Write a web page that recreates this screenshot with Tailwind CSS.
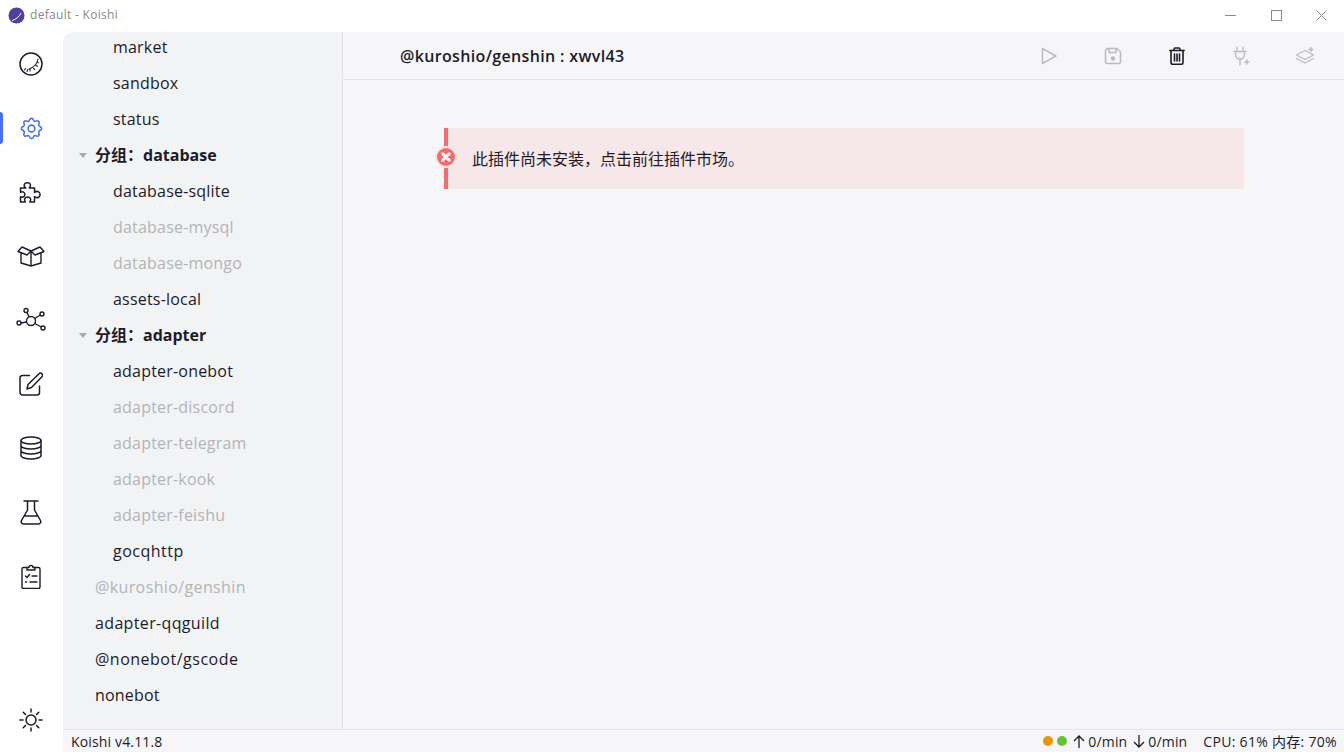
<!DOCTYPE html>
<html lang="zh-CN">
  <head>
    <meta charset="UTF-8" />
    <title>default - Koishi</title>
    <script src="https://cdn.jsdelivr.net/npm/@tailwindcss/browser@4"></script>
  </head>
  <body class="w-[1344px] h-[752px] overflow-hidden bg-white flex flex-col text-[#1c1c28] font-['Open_Sans','Noto_Sans_CJK_SC',sans-serif]">
    <!-- title bar -->
    <div class="h-[32px] shrink-0 flex items-center pl-[8px]">
      <svg class="w-[17px] h-[17px] -mt-[2px]" viewBox="0 0 17 17">
        <circle cx="8.5" cy="8.5" r="8" fill="#4f3f9e" />
        <path d="M4 13.5C8 12.5 11 10 13 6" stroke="#fff" stroke-width="1" fill="none" />
      </svg>
      <span class="ml-[5px] -mt-[2px] text-[12px] tracking-[0.3px] text-[#8a8a8a]">default - Koishi</span>
      <div class="ml-auto flex items-center -mt-[2px]">
        <div class="w-[46px] flex justify-center"><div class="w-[11px] h-px bg-[#8a8a8a]"></div></div>
        <div class="w-[46px] flex justify-center"><div class="w-[11px] h-[11px] border border-[#8a8a8a]"></div></div>
        <div class="w-[45px] flex justify-center pr-[1px]">
          <svg class="w-[11px] h-[11px]" viewBox="0 0 11 11"><path d="M.5.5l10 10M10.5.5l-10 10" stroke="#8a8a8a" fill="none" /></svg>
        </div>
      </div>
    </div>

    <div class="flex-1 flex min-h-0">
      <!-- activity bar -->
      <nav class="w-[63px] shrink-0 flex flex-col items-center relative pr-[1px]">
        <div class="absolute left-0 top-[80px] w-[3px] h-[32px] rounded-r-[3px] bg-[#4e6ef2]"></div>
        <div class="h-[64px] w-full flex items-center justify-center">
          <svg class="w-[24px] h-[24px]" viewBox="0 0 24 24" fill="none" stroke="currentColor" stroke-width="1.5" stroke-linecap="round">
            <circle cx="12" cy="12" r="11" />
            <path d="M19 7c-.5 4-3.500 8-9 10M5.500 18l1-1.500M8 19.500l.8-2M11 19l.2-1.800M14.500 16.500l1.300 1M17 13.500l1.500.7M18.200 10.500l1.500.2" stroke-width="1.100" />
          </svg>
        </div>
        <div class="h-[64px] w-full flex items-center justify-center">
          <svg class="w-[27px] h-[27px]" viewBox="0 0 24 24" fill="none" stroke="#4e6ef2" stroke-width="1.400" stroke-linecap="round" stroke-linejoin="round">
            <path d="M10.325 4.317c.426-1.756 2.924-1.756 3.350 0a1.724 1.724 0 0 0 2.573 1.066c1.543-.940 3.310.826 2.370 2.370a1.724 1.724 0 0 0 1.065 2.572c1.756.426 1.756 2.924 0 3.350a1.724 1.724 0 0 0-1.066 2.573c.940 1.543-.826 3.310-2.370 2.370a1.724 1.724 0 0 0-2.572 1.065c-.426 1.756-2.924 1.756-3.350 0a1.724 1.724 0 0 0-2.573-1.066c-1.543.940-3.310-.826-2.370-2.370a1.724 1.724 0 0 0-1.065-2.572c-1.756-.426-1.756-2.924 0-3.350a1.724 1.724 0 0 0 1.066-2.573c-.940-1.543.826-3.310 2.370-2.370.996.608 2.296.070 2.572-1.065z" />
            <circle cx="12" cy="12" r="3" />
          </svg>
        </div>
        <div class="h-[64px] w-full flex items-center justify-center">
          <svg class="w-[28px] h-[28px]" viewBox="0 0 24 24" fill="none" stroke="currentColor" stroke-width="1.300" stroke-linecap="round" stroke-linejoin="round">
            <path d="M3 8.500h4.500c-1.500-1-1.500-2-1.200-3 .5-1.700 4.400-2 5.200 0 .4 1-.2 2-1 3H15v4c1.200-1.200 2.500-1.200 3.500-.6 1.700 1 1.700 3.600 0 4.600-1 .6-2.300.5-3.500-.6v4.600h-4c.8-1 1-2 .5-3-.8-1.500-4-1.500-4.800 0-.5 1-.2 2 .5 3H3v-4.500c1 .6 2 .6 2.800 0 1.200-1 1.200-2.800 0-3.800-.8-.6-1.800-.6-2.800 0z" />
          </svg>
        </div>
        <div class="h-[64px] w-full flex items-center justify-center">
          <svg class="w-[28px] h-[24px]" viewBox="0 0 28 24" fill="none" stroke="currentColor" stroke-width="1.400" stroke-linecap="round" stroke-linejoin="round">
            <path d="M4 9.500V19l10 3 10-3V9.500M14 7v15M14 7L5 3 1 7.500l9 3.500zM14 7l9-4 4 4.500-9 3.500z" />
          </svg>
        </div>
        <div class="h-[64px] w-full flex items-center justify-center">
          <svg class="w-[30px] h-[26px]" viewBox="0 0 30 26" fill="none" stroke="currentColor" stroke-width="1.400">
            <circle cx="15" cy="14" r="4.500" /><circle cx="10" cy="3.500" r="2" /><circle cx="26" cy="7" r="2" /><circle cx="3" cy="16" r="2" /><circle cx="27" cy="21" r="2" />
            <path d="M11 5.500l2 4.500M24.300 8l-5.500 3.500M5 16l5.500-1M25.300 20l-6.500-3.500" />
          </svg>
        </div>
        <div class="h-[64px] w-full flex items-center justify-center">
          <svg class="w-[24px] h-[24px]" viewBox="0 0 24 24" fill="none" stroke="currentColor" stroke-width="1.500" stroke-linecap="round" stroke-linejoin="round">
            <path d="M10.500 3.500H3.500a2.500 2.500 0 0 0-2.500 2.500V20.500A2.500 2.500 0 0 0 3.500 23h14.500a2.500 2.500 0 0 0 2.500-2.500V14" />
            <path d="M20.500 1.300a2.200 2.200 0 0 1 2.700 3.200L12.500 15.500 8 17l1-4.500z" />
          </svg>
        </div>
        <div class="h-[64px] w-full flex items-center justify-center">
          <svg class="w-[22px] h-[24px]" viewBox="0 0 22 24" fill="none" stroke="currentColor" stroke-width="1.500">
            <ellipse cx="11" cy="4.500" rx="10" ry="3.500" />
            <path d="M1 4.500v15c0 2 4.500 3.500 10 3.500s10-1.500 10-3.500v-15M1 9.500c0 2 4.500 3.500 10 3.500s10-1.500 10-3.500M1 14.500c0 2 4.500 3.500 10 3.500s10-1.500 10-3.500" />
          </svg>
        </div>
        <div class="h-[64px] w-full flex items-center justify-center">
          <svg class="w-[22px] h-[25px]" viewBox="0 0 22 25" fill="none" stroke="currentColor" stroke-width="1.500" stroke-linejoin="round" stroke-linecap="round">
            <path d="M4 1h14M7.500 1v9L1.500 20.500c-.8 1.700.2 3.500 2 3.500h15c1.800 0 2.800-1.800 2-3.500L14.500 10V1M4.500 16h13" />
          </svg>
        </div>
        <div class="h-[64px] w-full flex items-center justify-center">
          <svg class="w-[20px] h-[25px]" viewBox="0 0 20 25" fill="none" stroke="currentColor" stroke-width="1.400" stroke-linecap="round" stroke-linejoin="round">
            <path d="M6 3.500H2.500A1.500 1.500 0 0 0 1 5v18a1.500 1.500 0 0 0 1.500 1.500h15A1.500 1.500 0 0 0 19 23V5a1.500 1.500 0 0 0-1.500-1.500H14" />
            <path d="M6 3.500h2a2 2 0 0 1 4 0h2V6H6z" />
            <path d="M4.500 12l1.500 1.500 2.500-3M11 12h5M4.500 18h1M9 18h7" />
          </svg>
        </div>
        <div class="mt-auto h-[64px] w-full flex items-center justify-center">
          <svg class="w-[24px] h-[24px]" viewBox="0 0 24 24" fill="none" stroke="currentColor" stroke-width="1.500" stroke-linecap="round">
            <circle cx="12" cy="12" r="5" />
            <path d="M12 1v3M12 20v3M1 12h3M20 12h3M4.200 4.200l2.200 2.200M17.600 17.600l2.200 2.200M4.200 19.800l2.200-2.200M17.600 6.400l2.200-2.200" />
          </svg>
        </div>
      </nav>

      <div class="flex-1 flex flex-col min-w-0">
        <div class="flex-1 flex min-h-0">
          <!-- plugin tree -->
          <aside class="w-[280px] shrink-0 bg-[#f2f3f5] rounded-tl-[12px] border-r border-[#e3e4e8] overflow-hidden text-[16px] leading-[36px] tracking-[0.2px]">
            <div class="-mt-[3px]">
              <div class="pl-[50px]">market</div>
              <div class="pl-[50px]">sandbox</div>
              <div class="pl-[50px]">status</div>
              <div class="flex items-center pl-[16px] font-bold tracking-normal">
                <div class="w-0 h-0 border-x-[4px] border-x-transparent border-t-[5px] border-t-[#a8a8ad] mr-[8px]"></div>分组：database
              </div>
              <div class="pl-[50px]">database-sqlite</div>
              <div class="pl-[50px] text-[#b4b4b8]">database-mysql</div>
              <div class="pl-[50px] text-[#b4b4b8]">database-mongo</div>
              <div class="pl-[50px]">assets-local</div>
              <div class="flex items-center pl-[16px] font-bold tracking-normal">
                <div class="w-0 h-0 border-x-[4px] border-x-transparent border-t-[5px] border-t-[#a8a8ad] mr-[8px]"></div>分组：adapter
              </div>
              <div class="pl-[50px]">adapter-onebot</div>
              <div class="pl-[50px] text-[#b4b4b8]">adapter-discord</div>
              <div class="pl-[50px] text-[#b4b4b8]">adapter-telegram</div>
              <div class="pl-[50px] text-[#b4b4b8]">adapter-kook</div>
              <div class="pl-[50px] text-[#b4b4b8]">adapter-feishu</div>
              <div class="pl-[50px] tracking-[0.5px]">gocqhttp</div>
              <div class="pl-[32px] text-[#b4b4b8] tracking-[0.38px]">@kuroshio/genshin</div>
              <div class="pl-[32px] tracking-[0.35px]">adapter-qqguild</div>
              <div class="pl-[32px] tracking-[0.5px]">@nonebot/gscode</div>
              <div class="pl-[32px]">nonebot</div>
            </div>
          </aside>

          <!-- main panel -->
          <main class="flex-1 min-w-0 bg-[#f6f6f9] flex flex-col">
            <header class="h-[48px] shrink-0 border-b border-[#e3e4e8] flex items-center pl-[57px]">
              <span class="text-[16px] font-semibold tracking-[0.35px]">@kuroshio/genshin : xwvl43</span>
              <div class="ml-auto flex items-center pr-[7px]">
                <div class="w-[64px] flex justify-center">
                  <svg class="w-[16px] h-[18px]" viewBox="0 0 16 18" fill="none" stroke="#bcbcc0" stroke-width="1.500" stroke-linejoin="round"><path d="M1.500 1.500v15L15 9z" /></svg>
                </div>
                <div class="w-[64px] flex justify-center">
                  <svg class="w-[18px] h-[18px]" viewBox="0 0 18 18" fill="none" stroke="#bcbcc0" stroke-width="1.500" stroke-linejoin="round">
                    <path d="M3 1.500h10l3.500 3.500v9.500a2 2 0 0 1-2 2h-11a2 2 0 0 1-2-2v-10.500a2 2 0 0 1 2-2zM5 1.500v4h7v-4" />
                    <circle cx="9" cy="11.500" r="1.500" fill="#bcbcc0" />
                  </svg>
                </div>
                <div class="w-[64px] flex justify-center">
                  <svg class="w-[16px] h-[18px]" viewBox="0 0 16 18" fill="none" stroke="#1c1c28" stroke-width="1.600" stroke-linecap="round">
                    <path d="M.8 3.500h14.400M5 3.500V2.200A1.200 1.200 0 0 1 6.200 1h3.600A1.200 1.200 0 0 1 11 2.200v1.300" />
                    <path d="M2 3.500v12a1.800 1.800 0 0 0 1.800 1.800h8.400a1.800 1.800 0 0 0 1.800-1.800v-12" />
                    <path d="M5.500 7v7M8 7v7M10.500 7v7" />
                  </svg>
                </div>
                <div class="w-[64px] flex justify-center">
                  <svg class="w-[17px] h-[20px]" viewBox="0 0 17 20" fill="none" stroke="#bcbcc0" stroke-width="1.400" stroke-linecap="round" stroke-linejoin="round">
                    <path d="M4 1v4M10 1v4M1 5.500h12M2.500 5.500v3a4.500 4.500 0 0 0 9 0v-3M7 13v6M14 14v4M12 16h4" />
                  </svg>
                </div>
                <div class="w-[64px] flex justify-center">
                  <svg class="w-[20px] h-[18px]" viewBox="0 0 20 18" fill="none" stroke="#bcbcc0" stroke-width="1.400" stroke-linecap="round" stroke-linejoin="round">
                    <path d="M10 3.500L1.500 8l8.500 4.500L18.500 8zM1.500 11.500l8.500 4.500 8.500-4.500M16 .5v4M14 2.500h4" />
                  </svg>
                </div>
              </div>
            </header>
            <div class="px-[101px] pt-[48px]">
              <div class="relative h-[61px] w-[800px] bg-[#f6e7e8] border-l-[4px] border-[#f56c6c] flex items-center pl-[24px] text-[16px]">
                <span class="absolute -left-[11px] top-[20px] w-[18px] h-[18px] rounded-full bg-[#f56c6c] ring-2 ring-[#f6e7e8] flex items-center justify-center">
                  <svg class="w-[10px] h-[10px]" viewBox="0 0 10 10"><path d="M1.800 1.800l6.400 6.400M8.200 1.800l-6.400 6.400" stroke="#fff" stroke-width="3" stroke-linecap="round" /></svg>
                </span>
                此插件尚未安装，点击前往插件市场。
              </div>
            </div>
          </main>
        </div>

        <!-- status bar -->
        <footer class="h-[23px] shrink-0 bg-[#f6f6f9] border-t border-[#e3e4e8] flex items-center pl-[8px] pr-[7px] text-[14px] tracking-[0.15px]">
          <span>Koishi v4.11.8</span>
          <div class="ml-auto flex items-center">
            <span class="w-[10px] h-[10px] rounded-full bg-[#e6950f]"></span>
            <span class="ml-[4px] w-[10px] h-[10px] rounded-full bg-[#67c23a]"></span>
            <svg class="ml-[6px] w-[12px] h-[13px]" viewBox="0 0 12 13" fill="none" stroke="#1c1c28" stroke-width="1.300"><path d="M6 13V1M1 6l5-5 5 5" /></svg>
            <span class="ml-[3px]">0/min</span>
            <svg class="ml-[6px] w-[12px] h-[13px]" viewBox="0 0 12 13" fill="none" stroke="#1c1c28" stroke-width="1.300"><path d="M6 0v12M1 7l5 5 5-5" /></svg>
            <span class="ml-[3px]">0/min</span>
            <span class="ml-[16px] tracking-[0.3px]">CPU: 61% 内存: 70%</span>
          </div>
        </footer>
      </div>
    </div>
  </body>
</html>
